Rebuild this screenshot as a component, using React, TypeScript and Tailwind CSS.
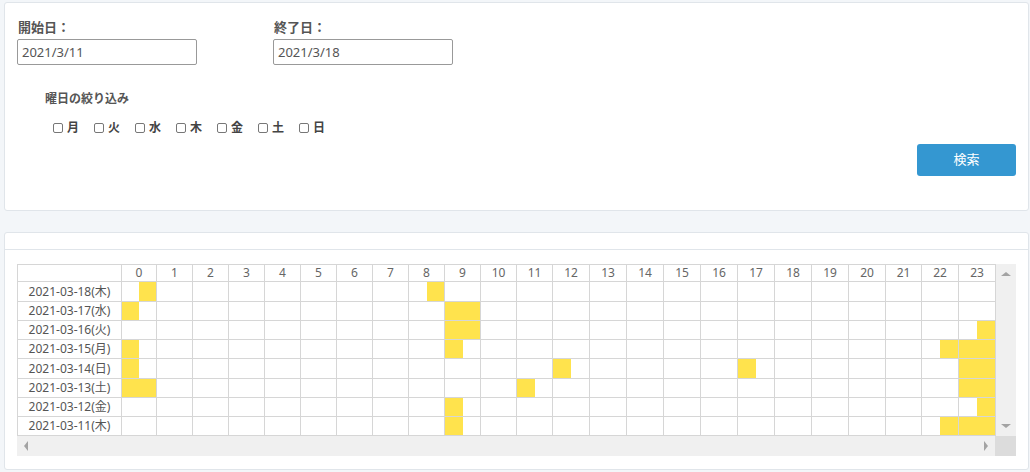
import React from "react";

const ROWS = [
  { label: "2021-03-18(木)", slots: { "0b": 1, "8b": 1 } },
  { label: "2021-03-17(水)", slots: { "0a": 1, "9a": 1, "9b": 1 } },
  { label: "2021-03-16(火)", slots: { "9a": 1, "9b": 1, "23b": 1 } },
  { label: "2021-03-15(月)", slots: { "0a": 1, "9a": 1, "22b": 1, "23a": 1, "23b": 1 } },
  { label: "2021-03-14(日)", slots: { "0a": 1, "12a": 1, "17a": 1, "23a": 1, "23b": 1 } },
  { label: "2021-03-13(土)", slots: { "0a": 1, "0b": 1, "11a": 1, "23a": 1, "23b": 1 } },
  { label: "2021-03-12(金)", slots: { "9a": 1, "23b": 1 } },
  { label: "2021-03-11(木)", slots: { "9a": 1, "22b": 1, "23a": 1, "23b": 1 } },
] as { label: string; slots: Record<string, number> }[];

const HOURS = Array.from({ length: 24 }, (_, i) => i);
// column widths follow the browser's auto layout in the original (two-digit hours are a bit wider)
const COL_W = [35, 36, 36, 36, 36, 36, 36, 36, 36, 36, 36, 36, 37, 37, 37, 37, 37, 37, 37, 37, 37, 36, 37, 37];
const DAYS = ["月", "火", "水", "木", "金", "土", "日"];

function DateField({ label, value }: { label: string; value: string }) {
  return (
    <div className="w-[256px]">
      <div className="h-[18px] leading-[18px] text-[13px] font-bold text-[#555] pl-[1px] mb-[3px]">{label}</div>
      <div className="w-[180px] h-[26px] border border-[#999] rounded-[2px] bg-white px-[4px] text-[13px] leading-[24px] text-[#555]">
        {value}
      </div>
    </div>
  );
}

export default function App() {
  return (
    <div className="min-h-screen bg-[#f3f6f9] pt-[2px] pl-[4px] pr-[1px] font-['Noto_Sans','Noto_Sans_CJK_JP',sans-serif]">
      {/* search conditions */}
      <div className="h-[209px] bg-white border border-[#e0e5ea] rounded-[3px] pt-[15px] px-[12px] flex flex-col">
        <div className="flex">
          <DateField label="開始日：" value="2021/3/11" />
          <DateField label="終了日：" value="2021/3/18" />
        </div>
        <div className="pl-[28px] mt-[25px]">
          <div className="h-[18px] leading-[18px] text-[12px] font-bold text-[#555]">曜日の絞り込み</div>
          <div className="flex mt-[11px] pl-[8px]">
            {DAYS.map((d) => (
              <label key={d} className="w-[41px] flex items-center h-[18px] text-[12px] font-bold text-[#444]">
                <span className="w-[10px] h-[10px] border border-[#777] rounded-[2px] mr-[4px]" />
                {d}
              </label>
            ))}
          </div>
        </div>
        <div className="flex justify-end mt-[7px]">
          <button className="w-[99px] h-[32px] bg-[#3497d1] rounded-[3px] text-white text-[13px]">検索</button>
        </div>
      </div>

      {/* heat map */}
      <div className="mt-[21px] h-[238px] bg-white border border-[#e0e5ea] rounded-[3px]">
        <div className="h-[17px] border-b border-[#e0e5ea]" />
        <div className="pt-[14px] pl-[12px]">
          <div className="w-[999px] flex flex-col">
            <div className="flex">
              <table className="w-[978px] table-fixed border-collapse text-[12px]">
                <colgroup>
                  <col className="w-[104px]" />
                  {HOURS.map((h) => (
                    <col key={h} style={{ width: COL_W[h] }} />
                  ))}
                </colgroup>
                <thead>
                  <tr className="h-[17px]">
                    <th className="border border-[#d6d6d6] p-0" />
                    {HOURS.map((h) => (
                      <th key={h} className="border border-[#d6d6d6] p-0 font-normal text-[#666] leading-[16px]">
                        {h}
                      </th>
                    ))}
                  </tr>
                </thead>
                <tbody>
                  {ROWS.map((r, i) => (
                    <tr key={r.label} className={i % 4 === 0 ? "h-[20px]" : "h-[19px]"}>
                      <td className="border border-[#d6d6d6] p-0 text-center text-[#555] leading-[18px]">{r.label}</td>
                      {HOURS.map((h) => (
                        <td key={h} className="border border-[#d6d6d6] p-0">
                          <div className={i % 4 === 0 ? "flex h-[19px]" : "flex h-[18px]"}>
                            <div className={r.slots[h + "a"] ? "flex-1 bg-[#ffe34d]" : "flex-1"} />
                            <div className={r.slots[h + "b"] ? "flex-1 bg-[#ffe34d]" : "flex-1"} />
                          </div>
                        </td>
                      ))}
                    </tr>
                  ))}
                </tbody>
              </table>
              {/* vertical scrollbar */}
              <div className="w-[21px] bg-[#f0f0f0] flex flex-col items-center justify-between py-[8px]">
                <span className="w-0 h-0 border-x-[5px] border-x-transparent border-b-[4px] border-b-[#a3a3a3]" />
                <span className="w-0 h-0 border-x-[5px] border-x-transparent border-t-[4px] border-t-[#a3a3a3]" />
              </div>
            </div>
            {/* horizontal scrollbar */}
            <div className="flex h-[20px]">
              <div className="w-[978px] bg-[#f0f0f0] flex items-center justify-between px-[7px]">
                <span className="w-0 h-0 border-y-[5px] border-y-transparent border-r-[4px] border-r-[#a3a3a3]" />
                <span className="w-0 h-0 border-y-[5px] border-y-transparent border-l-[4px] border-l-[#a3a3a3]" />
              </div>
              <div className="w-[21px] bg-[#dcdcdc]" />
            </div>
          </div>
        </div>
      </div>
    </div>
  );
}
